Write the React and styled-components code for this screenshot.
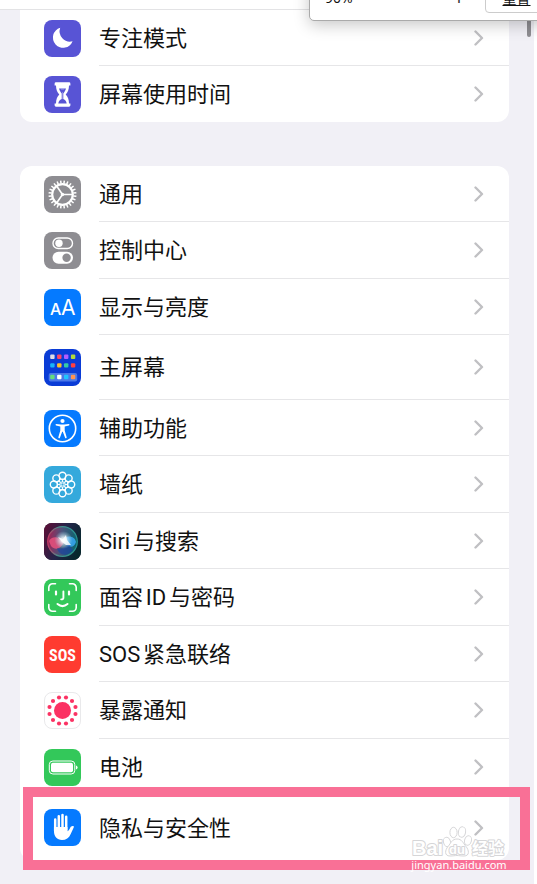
import React from "react";
import styled, { createGlobalStyle } from "styled-components";

const GlobalStyle = createGlobalStyle`
  * { box-sizing: border-box; }
  body {
    margin: 0;
    background: #fff;
    font-family: Roboto, "Noto Sans CJK SC", sans-serif;
    color: #111;
  }
`;

const Page = styled.div`
  position: relative;
  display: flex;
  flex-direction: column;
  min-height: 100vh;
  padding-right: 3px;
  background: #fff;
  overflow: hidden;
`;

const TopStrip = styled.header`
  flex: none;
  height: 10px;
  margin-right: -3px;
  background: #fff;
  border-bottom: 1px solid #e3e3e5;
`;

const Groups = styled.main`
  flex: 1;
  display: flex;
  flex-direction: column;
  gap: 44px;
  padding: 0 25px 24px 20px;
  background: #f1f0f6;
`;

const Card = styled.ul`
  list-style: none;
  margin: 0;
  padding: 0;
  background: #fff;
  border-radius: ${(p) => (p.$continued ? "0 0 12px 12px" : "12px")};
`;

const Item = styled.li`
  position: relative;
  height: ${(p) => (p.$tall ? 65 : 56)}px;
  &:nth-child(even) {
    height: ${(p) => (p.$tall ? 65 : p.$last ? 56 : 57)}px;
  }
`;

const RowLink = styled.a`
  display: flex;
  align-items: center;
  gap: 18px;
  height: 100%;
  padding-left: 24px;
  color: inherit;
  text-decoration: none;
`;

const RowBody = styled.span`
  flex: 1;
  display: flex;
  align-items: center;
  justify-content: space-between;
  height: 100%;
  padding-right: 25px;
  border-bottom: ${(p) => (p.$last ? "0" : "1px solid #e6e6e8")};
`;

const Label = styled.span`
  padding-top: 2px;
  font-size: 22px;
  line-height: 32px;
  white-space: nowrap;
  text-autospace: normal;
`;

const IconTile = styled.svg`
  display: block;
  flex: none;
  width: 37px;
  height: 37px;
  border-radius: 8px;
  background: ${(p) => p.$bg};
  border: ${(p) => (p.$outlined ? "1px solid #e9e9eb" : "0")};
`;

const ChevronSvg = styled.svg`
  display: block;
  width: 10px;
  height: 16px;
`;

const Highlight = styled.div`
  position: absolute;
  inset: -8px -21px -10px 3px;
  border: 10px solid #f97096;
  pointer-events: none;
`;

const Watermark = styled.div`
  position: absolute;
  right: 2px;
  bottom: -11px;
  width: 96px;
  pointer-events: none;
`;

const WatermarkLogo = styled.svg`
  display: block;
  width: 96px;
  height: 35px;
`;

const WatermarkUrl = styled.div`
  font: 11px/13px "Noto Sans", sans-serif;
  color: #fff;
  text-align: center;
  white-space: nowrap;
`;

const ScrollThumb = styled.div`
  position: absolute;
  top: 0;
  right: 6px;
  width: 4px;
  height: 37px;
  border-radius: 2px;
  background: #8e8d92;
`;

const ZoomPopup = styled.div`
  position: absolute;
  top: -29px;
  right: -20px;
  width: 248px;
  height: 50px;
  display: flex;
  align-items: center;
  padding: 10px 8px 7px 15px;
  background: #fff;
  border: 1px solid #aaa;
  border-radius: 5px;
  box-shadow: 0 4px 16px rgba(0, 0, 0, 0.22);
  font: 14px/20px "Noto Sans", "Noto Sans CJK SC", sans-serif;
`;

const ZoomValue = styled.span`
  flex: 1;
`;

const ZoomButton = styled.button`
  width: 30px;
  padding: 0;
  border: 0;
  background: none;
  color: #333;
  font: 20px/26px "Noto Sans", sans-serif;
`;

const ResetButton = styled.button`
  width: 63px;
  height: 31px;
  margin-left: 11px;
  padding: 0;
  border: 1px solid #ccc;
  border-radius: 4px;
  background: #fff;
  color: #111;
  font: 14px/20px "Noto Sans CJK SC", sans-serif;
  text-decoration: underline;
`;

const polar = (r, deg) => {
  const a = (deg * Math.PI) / 180;
  return [18.5 + r * Math.cos(a), 18.5 + r * Math.sin(a)];
};

const Tile = ({ bg, outlined, children }) => (
  <IconTile viewBox="0 0 37 37" $bg={bg} $outlined={outlined} aria-hidden="true">
    {children}
  </IconTile>
);

const FocusIcon = () => (
  <Tile bg="#5854d5">
    <path d="M16.2 7.8A10.2 10.2 0 1 0 28.6 21.3A10.4 10.4 0 0 1 16.2 7.8Z" fill="#fff" />
  </Tile>
);

const HourglassIcon = () => (
  <Tile bg="#5854d5">
    <path
      d="M12 6.3h13a1.4 1.4 0 0 1 1.4 1.4v1.8H25c0 4.200-1.200 6.500-3.300 9c2.100 2.500 3.300 4.800 3.300 9h1.400v1.800a1.400 1.400 0 0 1-1.400 1.400H12a1.400 1.400 0 0 1-1.400-1.400v-1.800H12c0-4.200 1.200-6.500 3.300-9c-2.100-2.500-3.300-4.800-3.300-9h-1.400V7.700A1.400 1.400 0 0 1 12 6.300Z"
      fill="#fff"
    />
    <path d="M15 12.500h7c-.6 2.100-1.600 3.600-2.700 5v5.500c2 1 3.100 2.400 3.400 4.600h-8.400c.3-2.200 1.400-3.600 3.400-4.600v-5.500c-1.100-1.400-2.100-2.900-2.700-5Z" fill="#5854d5" />
    <path d="M17 13.300h3.200M18.500 16v7" stroke="#fff" strokeWidth="0.6" opacity="0.5" />
  </Tile>
);

const GearIcon = () => (
  <Tile bg="#8e8d92">
    <g stroke="#fff" fill="none">
      <circle cx="18.500" cy="18.500" r="10.300" strokeWidth="2.200" />
      {Array.from({ length: 24 }, (_, i) => {
        const [x1, y1] = polar(11, i * 15 + 7.5);
        const [x2, y2] = polar(14, i * 15 + 7.5);
        return <line key={i} x1={x1} y1={y1} x2={x2} y2={y2} strokeWidth="1.500" />;
      })}
      {[0, 125, 235].map((d) => {
        const [x, y] = polar(10, d);
        return <line key={d} x1="18.500" y1="18.500" x2={x} y2={y} strokeWidth="1.600" />;
      })}
      <circle cx="18.500" cy="18.500" r="1.700" fill="#fff" stroke="none" />
    </g>
  </Tile>
);

const TogglesIcon = () => (
  <Tile bg="#8e8d92">
    <rect x="9" y="6" width="19.500" height="10.500" rx="5.250" fill="none" stroke="#fff" strokeWidth="1.400" />
    <circle cx="15" cy="11.250" r="3.700" fill="#fff" />
    <rect x="8.500" y="19.700" width="20.500" height="12" rx="6" fill="#fff" />
    <circle cx="22.600" cy="25.700" r="4.200" fill="#8e8d92" />
  </Tile>
);

const IconText = styled.text`
  font-family: ${(p) => p.$family};
  font-size: ${(p) => p.$size}px;
  font-weight: ${(p) => p.$weight};
  fill: #fff;
`;

const TextSizeIcon = () => (
  <Tile bg="#057aff">
    <IconText x="6" y="26" $family="Inter, sans-serif" $size={16} $weight={500}>A</IconText>
    <IconText x="17" y="26" $family="Inter, sans-serif" $size={21} $weight={400}>A</IconText>
  </Tile>
);

const homeDots = [
  [7.7, ["#dcdde6", "#ff4766", "#b35cff", "#b2da3c"]],
  [16.4, ["#18b4f8", "#ffc02a", "#35cba6", "#ff4040"]],
  [28, ["#64dc7c", "#ffffff", "#1fc4ff", "#ff9450"]],
];

const HomeScreenIcon = () => (
  <Tile bg="#0a3cd6">
    <rect x="4.700" y="24" width="28.500" height="8.500" rx="2" fill="#4a78e8" />
    {homeDots.map(([y, colors]) =>
      colors.map((c, i) => (
        <rect key={c} x={6.2 + i * 6.9} y={y - 2.2} width="4.400" height="4.400" rx="1" fill={c} />
      ))
    )}
  </Tile>
);

const AccessibilityIcon = () => (
  <Tile bg="#057aff">
    <circle cx="18.500" cy="18.500" r="13.200" fill="none" stroke="#fff" strokeWidth="1.600" />
    <circle cx="18.500" cy="11" r="2.100" fill="#fff" />
    <path
      d="M12.200 13.900l4.600.7h3.400l4.600-.7a.8.8 0 0 1 .2 1.500l-4.300 1.100v4l1.900 6.600a.8.8 0 0 1-1.500.6l-2.300-6h-.6l-2.300 6a.8.8 0 0 1-1.500-.6l1.900-6.600v-4l-4.300-1.100a.8.8 0 0 1 .2-1.500Z"
      fill="#fff"
    />
  </Tile>
);

const WallpaperIcon = () => (
  <Tile bg="#35a9dc">
    <g fill="none" stroke="#fff">
      {Array.from({ length: 8 }, (_, i) => {
        const [cx, cy] = polar(8.7, i * 45);
        return <circle key={i} cx={cx} cy={cy} r="3.500" strokeWidth="1.400" />;
      })}
      {Array.from({ length: 8 }, (_, i) => {
        const [cx, cy] = polar(4, i * 45 + 22.5);
        return <circle key={i} cx={cx} cy={cy} r="1.600" strokeWidth="0.900" />;
      })}
      <circle cx="18.500" cy="18.500" r="1.500" strokeWidth="0.900" />
    </g>
  </Tile>
);

const SiriIcon = () => (
  <Tile bg="#171830">
    <defs>
      <linearGradient id="siriBase" x1="0" y1="0.200" x2="1" y2="0.600">
        <stop offset="0" stopColor="#5a1038" />
        <stop offset="0.500" stopColor="#23254a" />
        <stop offset="1" stopColor="#06282d" />
      </linearGradient>
      <linearGradient id="siriOrb" x1="0" y1="0.400" x2="1" y2="0.500">
        <stop offset="0" stopColor="#c4265c" />
        <stop offset="0.450" stopColor="#56658c" />
        <stop offset="1" stopColor="#087a82" />
      </linearGradient>
      <radialGradient id="siriGlow">
        <stop offset="0" stopColor="#fff" />
        <stop offset="0.300" stopColor="#effcff" stopOpacity="0.800" />
        <stop offset="1" stopColor="#a5d9e8" stopOpacity="0" />
      </radialGradient>
      <linearGradient id="siriRing" x1="0" y1="0" x2="1" y2="0">
        <stop offset="0" stopColor="#f04570" />
        <stop offset="0.350" stopColor="#50b5a0" />
        <stop offset="1" stopColor="#32b8b0" />
      </linearGradient>
    </defs>
    <rect width="37" height="37" fill="url(#siriBase)" />
    <circle cx="18.500" cy="18.500" r="14.800" fill="url(#siriOrb)" opacity="0.750" stroke="url(#siriRing)" strokeWidth="1.200" />
    <path d="M5 18c4-6 10-4 15 1c-3 7-9 9-13 4Z" fill="#ef527e" opacity="0.800" />
    <path d="M18 17c5-6 13-4 14 2c-2 7-9 6-14-2Z" fill="#38a8f4" opacity="0.850" />
    <path d="M13 25c5 2 9-1 11-5c3 4 4 6 5 7c-5 7-14 6-16-2Z" fill="#183fa5" opacity="0.600" />
    <circle cx="19.500" cy="17" r="9" fill="url(#siriGlow)" />
    <path d="M14 14l5 2l3-4l1 5l4 5l-5 0l-4-3Z" fill="#fff" opacity="0.800" />
  </Tile>
);

const FaceIdIcon = () => (
  <Tile bg="#33c85a">
    <g fill="none" stroke="#fff" strokeWidth="1.600" strokeLinecap="round">
      <path d="M4.800 11.500V8.500a3.700 3.700 0 0 1 3.700-3.700h3M25.500 4.800h3a3.700 3.700 0 0 1 3.700 3.700v3M32.200 25.500v3a3.700 3.700 0 0 1-3.700 3.700h-3M11.500 32.200h-3a3.700 3.700 0 0 1-3.700-3.700v-3" />
      <path d="M12 12.500v3M25 12.500v3" strokeWidth="2.200" />
      <path d="M19.400 12.500v6.200q0 1.800-2.200 1.700" strokeWidth="1.900" />
      <path d="M13.500 25q5 4.200 10 0" strokeWidth="2" />
    </g>
  </Tile>
);

const SosIcon = () => (
  <Tile bg="#ff3b30">
    <IconText x="18.500" y="24.500" textAnchor="middle" $family={'"Roboto Condensed", "Open Sans", Roboto, sans-serif'} $size={16} $weight={700}>
      SOS
    </IconText>
  </Tile>
);

const ExposureIcon = () => (
  <Tile bg="#fff" outlined>
    <circle cx="18.500" cy="18.500" r="9" fill="#fb3263" />
    {Array.from({ length: 12 }, (_, i) => {
      const [cx, cy] = polar(14.2, i * 30 + 15);
      return <circle key={i} cx={cx} cy={cy} r="2.200" fill="#fb3263" />;
    })}
  </Tile>
);

const BatteryIcon = () => (
  <Tile bg="#33c85a">
    <rect x="5.300" y="12" width="25.500" height="13" rx="3.600" fill="none" stroke="#fff" strokeWidth="1" />
    <rect x="7" y="13.800" width="22" height="9.400" rx="2" fill="#fff" />
    <path d="M32 16.600q1.600.5 1.600 1.900t-1.600 1.900Z" fill="#fff" />
  </Tile>
);

const HandIcon = () => (
  <Tile bg="#057aff">
    <g stroke="#fff" strokeWidth="2.500" strokeLinecap="round">
      <path d="M11.200 10.500V22M14.800 7.300V20M18.500 6V20M22.200 7.700V21" />
    </g>
    <path
      d="M9.950 18H23.450V22.200C24.600 21.500 25.500 20.300 26.100 18.900C26.800 17.400 28.300 16.600 29.700 17.300C30 17.500 29.900 18 29.700 18.400L26.700 25C25 29 22 31 18 31C13 31 9.950 27.300 9.950 22Z"
      fill="#fff"
    />
  </Tile>
);

const Chevron = () => (
  <ChevronSvg viewBox="0 0 10 16" aria-hidden="true">
    <path d="M1.500 1.500L8 8L1.500 14.500" fill="none" stroke="#c0c0c3" strokeWidth="2.400" strokeLinecap="round" strokeLinejoin="round" />
  </ChevronSvg>
);

const LogoText = styled.text`
  font-family: "Liberation Sans", "Noto Sans CJK SC", sans-serif;
  font-size: ${(p) => p.$size}px;
  font-weight: 700;
  fill: #fff;
  stroke: #d6d6d8;
  stroke-width: 2px;
  stroke-linejoin: round;
  paint-order: stroke;
`;

const BaiduWatermark = () => (
  <Watermark>
    <WatermarkLogo viewBox="0 0 96 35" aria-label="Baidu 经验">
      <LogoText x="1" y="32" $size={20}>Bai</LogoText>
      <g fill="#fff" stroke="#d6d6d8" strokeWidth="1">
        <ellipse cx="36" cy="19" rx="3.500" ry="4.800" transform="rotate(-15 36 19)" />
        <ellipse cx="42.500" cy="9.500" rx="3.600" ry="5.200" />
        <ellipse cx="51" cy="9" rx="3.600" ry="5.200" transform="rotate(10 51 9)" />
        <ellipse cx="57" cy="17.500" rx="3.400" ry="4.800" transform="rotate(15 57 17.500)" />
        <path d="M46 16c5 0 6 4 9 7.500s4 9.500-2 9.500c-3 0-5-.5-7-.5s-4 .5-7 .5c-6 0-5-6-2-9.500s4-7.500 9-7.500Z" />
      </g>
      <LogoText x="38" y="31" $size={13}>du</LogoText>
      <LogoText x="61" y="31" $size={16}>经验</LogoText>
    </WatermarkLogo>
    <WatermarkUrl>jingyan.baidu.com</WatermarkUrl>
  </Watermark>
);

const groups = [
  {
    id: "focus",
    continued: true,
    rows: [
      { label: "专注模式", Icon: FocusIcon },
      { label: "屏幕使用时间", Icon: HourglassIcon },
    ],
  },
  {
    id: "general",
    rows: [
      { label: "通用", Icon: GearIcon },
      { label: "控制中心", Icon: TogglesIcon },
      { label: "显示与亮度", Icon: TextSizeIcon },
      { label: "主屏幕", Icon: HomeScreenIcon, tall: true },
      { label: "辅助功能", Icon: AccessibilityIcon },
      { label: "墙纸", Icon: WallpaperIcon },
      { label: "Siri与搜索", Icon: SiriIcon },
      { label: "面容ID与密码", Icon: FaceIdIcon },
      { label: "SOS紧急联络", Icon: SosIcon },
      { label: "暴露通知", Icon: ExposureIcon },
      { label: "电池", Icon: BatteryIcon },
      { label: "隐私与安全性", Icon: HandIcon, tall: true, highlighted: true },
    ],
  },
];

const SettingsRow = ({ row, last }) => (
  <Item $tall={row.tall} $last={last}>
    <RowLink href="#">
      <row.Icon />
      <RowBody $last={last}>
        <Label>{row.label}</Label>
        <Chevron />
      </RowBody>
    </RowLink>
    {row.highlighted && (
      <>
        <Highlight />
        <BaiduWatermark />
      </>
    )}
  </Item>
);

export default function App() {
  return (
    <Page>
      <GlobalStyle />
      <TopStrip />
      <Groups>
        {groups.map((g) => (
          <Card key={g.id} $continued={g.continued}>
            {g.rows.map((row, i) => (
              <SettingsRow key={row.label} row={row} last={i === g.rows.length - 1} />
            ))}
          </Card>
        ))}
      </Groups>
      <ScrollThumb />
      <ZoomPopup>
        <ZoomValue>90%</ZoomValue>
        <ZoomButton type="button" aria-label="放大">+</ZoomButton>
        <ResetButton type="button">重置</ResetButton>
      </ZoomPopup>
    </Page>
  );
}
